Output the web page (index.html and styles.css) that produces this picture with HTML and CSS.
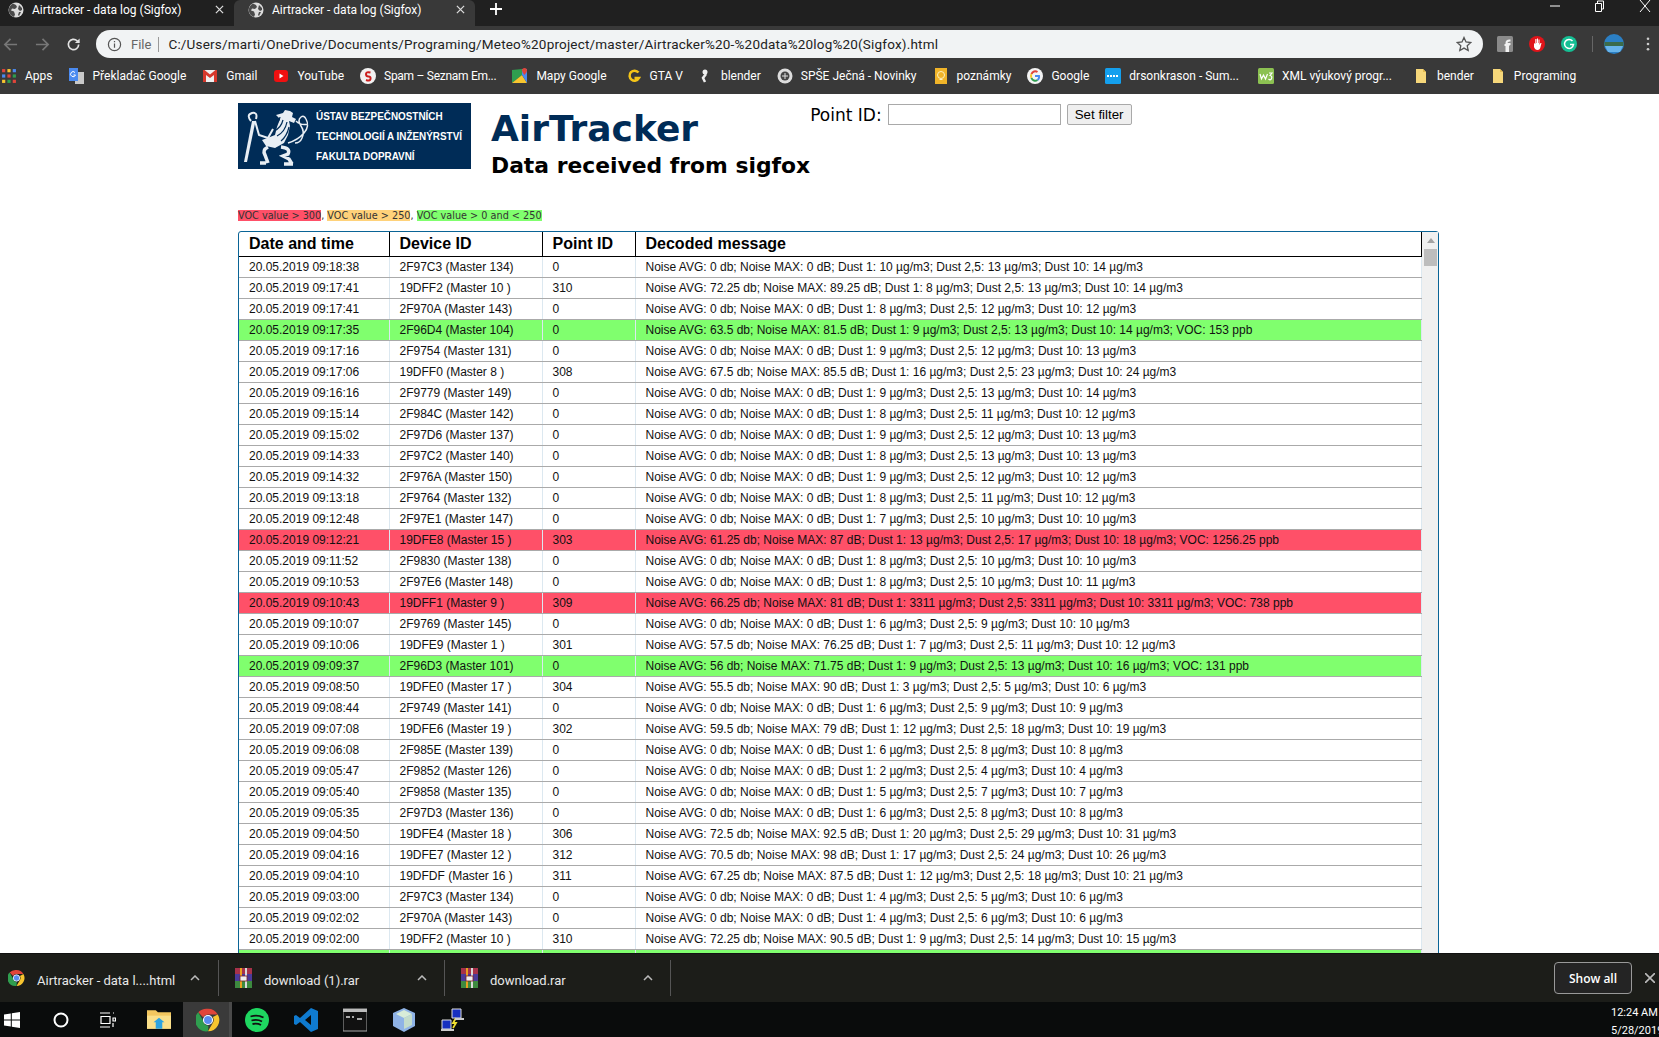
FILE: index.html
```html
<!DOCTYPE html>
<html lang="en">
	<head>
		<meta charset="UTF-8">
		<meta name="viewport" content="width=device-width, initial-scale=1.0">
		<title>Airtracker - data log (Sigfox)</title>
		<link rel="stylesheet" href="styles.css">
	</head>
	<body>
		<svg class="defs" width="0" height="0">
			<defs>
				<symbol id="globe" viewBox="0 0 16 16">
					<circle cx="8" cy="8" r="7.5" fill="#dcdcdc"/>
					<path d="M5 1.5l3 1.5 1 2-2 2-3-.5-1 2 3 1 1 3-1 2.5C3 14 .8 11.5.8 8 .8 5.300 2.500 2.700 5 1.500zM11 3l3 3v2l-2 1-2-2zM11 10l2 0-2 4-1-1z" fill="#4a4a4a"/>
				</symbol>
				<symbol id="chrome" viewBox="0 0 32 32">
					<path d="M16 1a15 15 0 0 1 13 7.500H16a7.500 7.500 0 0 0-6.500 3.750L3 5.800A15 15 0 0 1 16 1z" fill="#e0453a"/>
					<path d="M29 8.500A15 15 0 0 1 16 31l6.500-11.250A7.500 7.500 0 0 0 22.500 12z" fill="#f7c52f"/>
					<path d="M16 31A15 15 0 0 1 3 5.800l6.500 11.200a7.500 7.500 0 0 0 7 6.500z" fill="#2f9e4f"/>
					<circle cx="16" cy="16" r="6" fill="#5a8cf0" stroke="#fff" stroke-width="1.500"/>
				</symbol>
				<symbol id="folder" viewBox="0 0 16 16">
					<path d="M3 1h7l3 3v11H3z" fill="#f6d77a"/>
					<path d="M10 1l3 3h-3z" fill="#e3b94e"/>
				</symbol>
				<symbol id="rar" viewBox="0 0 17 20">
					<rect width="17" height="6" fill="#a6324a"/>
					<rect y="6" width="17" height="7" fill="#4b3a9a"/>
					<rect y="13" width="17" height="7" fill="#3d8a3f"/>
					<rect x="5" y="0" width="2" height="20" fill="#e8a020"/>
					<rect x="10" y="0" width="2" height="20" fill="#d9d9d9"/>
					<rect x="5" y="8" width="7" height="5" fill="#f0f0f0" stroke="#7a1f1f" stroke-width=".8"/>
				</symbol>
			</defs>
		</svg>

		<div class="tabbar">
			<div class="tab">
				<svg class="fav"><use href="#globe"/></svg>
				<span class="tab-title">Airtracker - data log (Sigfox)</span>
				<svg class="tab-x" viewBox="0 0 10 10"><path d="M1 1l8 8M9 1l-8 8"/></svg>
			</div>
			<div class="tab tab-on">
				<svg class="fav"><use href="#globe"/></svg>
				<span class="tab-title">Airtracker - data log (Sigfox)</span>
				<svg class="tab-x" viewBox="0 0 10 10"><path d="M1 1l8 8M9 1l-8 8"/></svg>
			</div>
			<svg class="tab-new" viewBox="0 0 12 12"><path d="M6 0v12M0 6h12"/></svg>
			<div class="winbtns">
				<svg class="win" viewBox="0 0 12 12"><path d="M1 6h10"/></svg>
				<svg class="win" viewBox="0 0 12 12"><path d="M1.500 3.500h6v8h-6zM3.500 3.500v-2.500h6v8h-2"/></svg>
				<svg class="win" viewBox="0 0 12 12"><path d="M1 0l10 12M11 0l-10 12"/></svg>
			</div>
		</div>

		<div class="navbar">
			<svg class="nav-ico nav-off" viewBox="0 0 16 16"><path d="M15 8H2M8 2L2 8l6 6"/></svg>
			<svg class="nav-ico nav-off" viewBox="0 0 16 16"><path d="M1 8h13M8 2l6 6-6 6"/></svg>
			<svg class="nav-ico" viewBox="0 0 16 16"><path d="M13.500 8a5.500 5.500 0 1 1-1.700-4L14 6"/><path class="fill" d="M14.500 1.500v5h-5z"/></svg>
			<div class="omni">
				<svg class="info" viewBox="0 0 16 16"><circle cx="8" cy="8" r="6.500"/><path d="M8 7v4.500M8 4.200v1.500"/></svg>
				<span class="scheme">File</span>
				<span class="url">C:/Users/marti/OneDrive/Documents/Programing/Meteo%20project/master/Airtracker%20-%20data%20log%20(Sigfox).html</span>
				<svg class="star" viewBox="0 0 16 16"><path d="M8 1.500l2 4.500 4.800.5-3.600 3.200 1 4.800L8 12.100l-4.200 2.400 1-4.800L1.200 6.500 6 6z"/></svg>
			</div>
			<div class="exts">
				<svg class="ext" viewBox="0 0 16 16"><rect width="16" height="16" rx="1.500" fill="#8a8a8a"/><path d="M11 16V8h2.500M13.500 4.500H12.500Q9.500 4.500 9.500 7v9M7.500 9h5" fill="none" stroke="#f2f2f2" stroke-width="2"/></svg>
				<svg class="ext" viewBox="0 0 16 16"><circle cx="8" cy="8" r="8" fill="#e0141a"/><path d="M5 7v4q1 3 3.500 3t3-3l1-4-1 0-1 2V3.500H9.500V7h-.5V2.500H8V7h-.5V3H6.300v5z" fill="#fff"/></svg>
				<svg class="ext" viewBox="0 0 16 16"><circle cx="8" cy="8" r="8" fill="#15bf94"/><path d="M11.500 5a4.500 4.500 0 1 0 1 3.500H9" fill="none" stroke="#fff" stroke-width="1.500"/></svg>
				<span class="ext-sep"></span>
				<svg class="ext ext-user" viewBox="0 0 20 20"><circle cx="10" cy="10" r="10" fill="#2b7fc4"/><path d="M.5 8h19v4H.5z" fill="#3b6b4a"/><path d="M1 12h18l-3 6H4z" fill="#68b4ea"/></svg>
				<svg class="dots" viewBox="0 0 4 16"><circle cx="2" cy="2" r="1.500"/><circle cx="2" cy="8" r="1.500"/><circle cx="2" cy="14" r="1.500"/></svg>
			</div>
		</div>

		<div class="bookmarks">
			<a class="bm"><svg class="bm-ico" viewBox="0 0 15 15">
				<path d="M1 1h3v3H1z" fill="#e0453a"/><path d="M6 1h3v3H6z" fill="#f7c52f"/><path d="M11 1h3v3h-3z" fill="#4a8af0"/>
				<path d="M1 6h3v3H1z" fill="#4a8af0"/><path d="M6 6h3v3H6z" fill="#e0453a"/><path d="M11 6h3v3h-3z" fill="#2f9e4f"/>
				<path d="M1 11h3v3H1z" fill="#f7c52f"/><path d="M6 11h3v3H6z" fill="#2f9e4f"/><path d="M11 11h3v3h-3z" fill="#e0453a"/>
			</svg>Apps</a>
			<a class="bm"><svg class="bm-ico" viewBox="0 0 16 16"><path d="M6 4h9v12H6z" fill="#c9c9c9"/><path d="M0 0h9v13H0z" fill="#4a8af0"/><path d="M6 4.500a2.500 2.500 0 1 0 .5 2.500H4.500" fill="none" stroke="#fff"/></svg>Překladač Google</a>
			<a class="bm"><svg class="bm-ico" viewBox="0 0 16 16"><path d="M1 2h14v12H1z" fill="#f0f0f0"/><path d="M1 2v12h3V7l4 3 4-3v7h3V2h-1.500L8 6.500 2.500 2z" fill="#d6382c"/></svg>Gmail</a>
			<a class="bm"><svg class="bm-ico" viewBox="0 0 16 16"><rect x="1" y="2" width="14" height="12" rx="3" fill="#f01010"/><path d="M6.500 5.500v5l4-2.500z" fill="#fff"/></svg>YouTube</a>
			<a class="bm bm-tight"><svg class="bm-ico" viewBox="0 0 16 16"><circle cx="8" cy="8" r="8" fill="#f2f2f2"/><path d="M10.500 4.500Q6 3.500 6 6t2.500 2.500 2 2.500-4.500 1" fill="none" stroke="#cc1f1f" stroke-width="2"/></svg>Spam – Seznam Em...</a>
			<a class="bm"><svg class="bm-ico" viewBox="0 0 16 16"><path d="M0 2l10-1v6L0 15z" fill="#2f9e4f"/><path d="M0 15l10-8 5 8z" fill="#f7c52f"/><path d="M10 7l5 8V1H10z" fill="#4a8af0"/><path d="M12.500 0a2.500 2.500 0 0 1 2.500 2.500Q15 4 12.500 7 10 4 10 2.500A2.500 2.500 0 0 1 12.500 0z" fill="#e0453a"/></svg>Mapy Google</a>
			<a class="bm bm-push"><svg class="bm-ico" viewBox="0 0 16 16"><path d="M12.500 4.500A5 5 0 1 0 13 10H8.500" fill="none" stroke="#f5c518" stroke-width="2.500"/></svg>GTA V</a>
			<a class="bm bm-pull"><svg class="bm-ico" viewBox="0 0 16 16"><circle cx="8" cy="4" r="2.500" fill="#eee"/><path d="M9 6l-3 4 2 4" fill="none" stroke="#eee" stroke-width="2.500"/></svg>blender</a>
			<a class="bm"><svg class="bm-ico" viewBox="0 0 16 16"><circle cx="8" cy="8" r="7.500" fill="#ddd"/><circle cx="8" cy="8" r="4.500" fill="#444"/><path d="M5 8h6M8 5v6" stroke="#ddd"/></svg>SPŠE Ječná - Novinky</a>
			<a class="bm"><svg class="bm-ico" viewBox="0 0 16 16"><path d="M2 0h12v16H2z" fill="#f0b429"/><circle cx="8" cy="7" r="3.500" fill="none" stroke="#fdf0c0"/><path d="M6.500 11.500h3" stroke="#fdf0c0"/></svg>poznámky</a>
			<a class="bm"><svg class="bm-ico" viewBox="0 0 16 16"><circle cx="8" cy="8" r="8" fill="#f4f4f4"/><path d="M4.500 6a4 4 0 0 1 6-2" fill="none" stroke="#e0453a" stroke-width="2"/><path d="M4.500 6a4 4 0 0 0 0 4" fill="none" stroke="#f7c52f" stroke-width="2"/><path d="M4.500 10a4 4 0 0 0 6 2" fill="none" stroke="#2f9e4f" stroke-width="2"/><path d="M10.500 12a4 4 0 0 0 1.500-4H8" fill="none" stroke="#4a8af0" stroke-width="2"/></svg>Google</a>
			<a class="bm"><svg class="bm-ico" viewBox="0 0 16 16"><rect width="16" height="16" rx="1.500" fill="#14a0ee"/><path d="M2 8h12" stroke="#fff" stroke-width="2" stroke-dasharray="2 1"/></svg>drsonkrason - Sum...</a>
			<a class="bm bm-push"><svg class="bm-ico" viewBox="0 0 16 16"><rect width="16" height="16" rx="1.500" fill="#8cc152"/><path d="M2 6l1.500 5 2-4 2 4L9.500 6M11 5h3l-2 2.500q2.500.5 1.500 3t-3 .5" fill="none" stroke="#fff" stroke-width="1.200"/></svg>XML výukový progr...</a>
			<a class="bm bm-push2"><svg class="bm-ico"><use href="#folder"/></svg>bender</a>
			<a class="bm"><svg class="bm-ico"><use href="#folder"/></svg>Programing</a>
		</div>

		<main class="page">
			<header class="head">
				<div class="logo">
					<svg class="lion" viewBox="0 0 78 66">
						<path class="lion-fill" d="M6 59L14 18h3.500L9 59z"/>
						<path class="lion-line" d="M13 18q-5-6 1-8 6-1 4 6M17 18l4 14 9 3 5-9"/>
						<path class="lion-fill" d="M38 12l7-2 2-3 5 1 3 2-1 4 4 2-2 4-5-2 1 5-2 9-4 8-9 5-9-2-4-6 8-3 5-2 2-8 3-8z"/>
						<path class="lion-blue" d="M45 17q-2 8-9 11M49 19q-2 10-10 14M51 24q-2 9-8 14M42 14q-1 6-6 8"/>
						<path class="lion-leg" d="M30 44q-6 3-3 8l3 8M28 60h-6M43 44q10 1 7 7l-5 2 6 3 3 5M55 61h-9"/>
						<path class="lion-tail" d="M50 40q10-3 16-10 6-7 2-14-2-4-5-2-4 3 0 9 4 6 1 12-2 5-7 5M58 18q5 5 12 3"/>
					</svg>
					<div class="logo-text">
						<span>ÚSTAV BEZPEČNOSTNÍCH</span>
						<span>TECHNOLOGIÍ A INŽENÝRSTVÍ</span>
						<span>FAKULTA DOPRAVNÍ</span>
					</div>
				</div>
				<div class="titles">
					<h1>AirTracker</h1>
					<h2>Data received from sigfox</h2>
				</div>
				<form class="filter">
					<label for="point">Point ID:</label>
					<input id="point" type="text">
					<button type="submit">Set filter</button>
				</form>
			</header>

			<p class="legend"><span class="red">VOC value &gt; 300</span>, <span class="orange">VOC value &gt; 250</span>, <span class="green">VOC value &gt; 0 and &lt; 250</span></p>

			<div class="logbox">
				<table class="log">
					<colgroup><col class="c1"><col class="c2"><col class="c3"><col></colgroup>
					<thead>
						<tr><th>Date and time</th><th>Device ID</th><th>Point ID</th><th>Decoded message</th></tr>
					</thead>
					<tbody>
						<tr><td>20.05.2019 09:18:38</td><td>2F97C3 (Master 134)</td><td>0</td><td>Noise AVG: 0 db; Noise MAX: 0 dB; Dust 1: 10 µg/m3; Dust 2,5: 13 µg/m3; Dust 10: 14 µg/m3</td></tr>
						<tr><td>20.05.2019 09:17:41</td><td>19DFF2 (Master 10 )</td><td>310</td><td>Noise AVG: 72.25 db; Noise MAX: 89.25 dB; Dust 1: 8 µg/m3; Dust 2,5: 13 µg/m3; Dust 10: 14 µg/m3</td></tr>
						<tr><td>20.05.2019 09:17:41</td><td>2F970A (Master 143)</td><td>0</td><td>Noise AVG: 0 db; Noise MAX: 0 dB; Dust 1: 8 µg/m3; Dust 2,5: 12 µg/m3; Dust 10: 12 µg/m3</td></tr>
						<tr class="green"><td>20.05.2019 09:17:35</td><td>2F96D4 (Master 104)</td><td>0</td><td>Noise AVG: 63.5 db; Noise MAX: 81.5 dB; Dust 1: 9 µg/m3; Dust 2,5: 13 µg/m3; Dust 10: 14 µg/m3; VOC: 153 ppb</td></tr>
						<tr><td>20.05.2019 09:17:16</td><td>2F9754 (Master 131)</td><td>0</td><td>Noise AVG: 0 db; Noise MAX: 0 dB; Dust 1: 9 µg/m3; Dust 2,5: 12 µg/m3; Dust 10: 13 µg/m3</td></tr>
						<tr><td>20.05.2019 09:17:06</td><td>19DFF0 (Master 8 )</td><td>308</td><td>Noise AVG: 67.5 db; Noise MAX: 85.5 dB; Dust 1: 16 µg/m3; Dust 2,5: 23 µg/m3; Dust 10: 24 µg/m3</td></tr>
						<tr><td>20.05.2019 09:16:16</td><td>2F9779 (Master 149)</td><td>0</td><td>Noise AVG: 0 db; Noise MAX: 0 dB; Dust 1: 9 µg/m3; Dust 2,5: 13 µg/m3; Dust 10: 14 µg/m3</td></tr>
						<tr><td>20.05.2019 09:15:14</td><td>2F984C (Master 142)</td><td>0</td><td>Noise AVG: 0 db; Noise MAX: 0 dB; Dust 1: 8 µg/m3; Dust 2,5: 11 µg/m3; Dust 10: 12 µg/m3</td></tr>
						<tr><td>20.05.2019 09:15:02</td><td>2F97D6 (Master 137)</td><td>0</td><td>Noise AVG: 0 db; Noise MAX: 0 dB; Dust 1: 9 µg/m3; Dust 2,5: 12 µg/m3; Dust 10: 13 µg/m3</td></tr>
						<tr><td>20.05.2019 09:14:33</td><td>2F97C2 (Master 140)</td><td>0</td><td>Noise AVG: 0 db; Noise MAX: 0 dB; Dust 1: 8 µg/m3; Dust 2,5: 13 µg/m3; Dust 10: 13 µg/m3</td></tr>
						<tr><td>20.05.2019 09:14:32</td><td>2F976A (Master 150)</td><td>0</td><td>Noise AVG: 0 db; Noise MAX: 0 dB; Dust 1: 9 µg/m3; Dust 2,5: 12 µg/m3; Dust 10: 12 µg/m3</td></tr>
						<tr><td>20.05.2019 09:13:18</td><td>2F9764 (Master 132)</td><td>0</td><td>Noise AVG: 0 db; Noise MAX: 0 dB; Dust 1: 8 µg/m3; Dust 2,5: 11 µg/m3; Dust 10: 12 µg/m3</td></tr>
						<tr><td>20.05.2019 09:12:48</td><td>2F97E1 (Master 147)</td><td>0</td><td>Noise AVG: 0 db; Noise MAX: 0 dB; Dust 1: 7 µg/m3; Dust 2,5: 10 µg/m3; Dust 10: 10 µg/m3</td></tr>
						<tr class="red"><td>20.05.2019 09:12:21</td><td>19DFE8 (Master 15 )</td><td>303</td><td>Noise AVG: 61.25 db; Noise MAX: 87 dB; Dust 1: 13 µg/m3; Dust 2,5: 17 µg/m3; Dust 10: 18 µg/m3; VOC: 1256.25 ppb</td></tr>
						<tr><td>20.05.2019 09:11:52</td><td>2F9830 (Master 138)</td><td>0</td><td>Noise AVG: 0 db; Noise MAX: 0 dB; Dust 1: 8 µg/m3; Dust 2,5: 10 µg/m3; Dust 10: 10 µg/m3</td></tr>
						<tr><td>20.05.2019 09:10:53</td><td>2F97E6 (Master 148)</td><td>0</td><td>Noise AVG: 0 db; Noise MAX: 0 dB; Dust 1: 8 µg/m3; Dust 2,5: 10 µg/m3; Dust 10: 11 µg/m3</td></tr>
						<tr class="red"><td>20.05.2019 09:10:43</td><td>19DFF1 (Master 9 )</td><td>309</td><td>Noise AVG: 66.25 db; Noise MAX: 81 dB; Dust 1: 3311 µg/m3; Dust 2,5: 3311 µg/m3; Dust 10: 3311 µg/m3; VOC: 738 ppb</td></tr>
						<tr><td>20.05.2019 09:10:07</td><td>2F9769 (Master 145)</td><td>0</td><td>Noise AVG: 0 db; Noise MAX: 0 dB; Dust 1: 6 µg/m3; Dust 2,5: 9 µg/m3; Dust 10: 10 µg/m3</td></tr>
						<tr><td>20.05.2019 09:10:06</td><td>19DFE9 (Master 1 )</td><td>301</td><td>Noise AVG: 57.5 db; Noise MAX: 76.25 dB; Dust 1: 7 µg/m3; Dust 2,5: 11 µg/m3; Dust 10: 12 µg/m3</td></tr>
						<tr class="green"><td>20.05.2019 09:09:37</td><td>2F96D3 (Master 101)</td><td>0</td><td>Noise AVG: 56 db; Noise MAX: 71.75 dB; Dust 1: 9 µg/m3; Dust 2,5: 13 µg/m3; Dust 10: 16 µg/m3; VOC: 131 ppb</td></tr>
						<tr><td>20.05.2019 09:08:50</td><td>19DFE0 (Master 17 )</td><td>304</td><td>Noise AVG: 55.5 db; Noise MAX: 90 dB; Dust 1: 3 µg/m3; Dust 2,5: 5 µg/m3; Dust 10: 6 µg/m3</td></tr>
						<tr><td>20.05.2019 09:08:44</td><td>2F9749 (Master 141)</td><td>0</td><td>Noise AVG: 0 db; Noise MAX: 0 dB; Dust 1: 6 µg/m3; Dust 2,5: 9 µg/m3; Dust 10: 9 µg/m3</td></tr>
						<tr><td>20.05.2019 09:07:08</td><td>19DFE6 (Master 19 )</td><td>302</td><td>Noise AVG: 59.5 db; Noise MAX: 79 dB; Dust 1: 12 µg/m3; Dust 2,5: 18 µg/m3; Dust 10: 19 µg/m3</td></tr>
						<tr><td>20.05.2019 09:06:08</td><td>2F985E (Master 139)</td><td>0</td><td>Noise AVG: 0 db; Noise MAX: 0 dB; Dust 1: 6 µg/m3; Dust 2,5: 8 µg/m3; Dust 10: 8 µg/m3</td></tr>
						<tr><td>20.05.2019 09:05:47</td><td>2F9852 (Master 126)</td><td>0</td><td>Noise AVG: 0 db; Noise MAX: 0 dB; Dust 1: 2 µg/m3; Dust 2,5: 4 µg/m3; Dust 10: 4 µg/m3</td></tr>
						<tr><td>20.05.2019 09:05:40</td><td>2F9858 (Master 135)</td><td>0</td><td>Noise AVG: 0 db; Noise MAX: 0 dB; Dust 1: 5 µg/m3; Dust 2,5: 7 µg/m3; Dust 10: 7 µg/m3</td></tr>
						<tr><td>20.05.2019 09:05:35</td><td>2F97D3 (Master 136)</td><td>0</td><td>Noise AVG: 0 db; Noise MAX: 0 dB; Dust 1: 6 µg/m3; Dust 2,5: 8 µg/m3; Dust 10: 8 µg/m3</td></tr>
						<tr><td>20.05.2019 09:04:50</td><td>19DFE4 (Master 18 )</td><td>306</td><td>Noise AVG: 72.5 db; Noise MAX: 92.5 dB; Dust 1: 20 µg/m3; Dust 2,5: 29 µg/m3; Dust 10: 31 µg/m3</td></tr>
						<tr><td>20.05.2019 09:04:16</td><td>19DFE7 (Master 12 )</td><td>312</td><td>Noise AVG: 70.5 db; Noise MAX: 98 dB; Dust 1: 17 µg/m3; Dust 2,5: 24 µg/m3; Dust 10: 26 µg/m3</td></tr>
						<tr><td>20.05.2019 09:04:10</td><td>19DFDF (Master 16 )</td><td>311</td><td>Noise AVG: 67.25 db; Noise MAX: 87.5 dB; Dust 1: 12 µg/m3; Dust 2,5: 18 µg/m3; Dust 10: 21 µg/m3</td></tr>
						<tr><td>20.05.2019 09:03:00</td><td>2F97C3 (Master 134)</td><td>0</td><td>Noise AVG: 0 db; Noise MAX: 0 dB; Dust 1: 4 µg/m3; Dust 2,5: 5 µg/m3; Dust 10: 6 µg/m3</td></tr>
						<tr><td>20.05.2019 09:02:02</td><td>2F970A (Master 143)</td><td>0</td><td>Noise AVG: 0 db; Noise MAX: 0 dB; Dust 1: 4 µg/m3; Dust 2,5: 6 µg/m3; Dust 10: 6 µg/m3</td></tr>
						<tr><td>20.05.2019 09:02:00</td><td>19DFF2 (Master 10 )</td><td>310</td><td>Noise AVG: 72.25 db; Noise MAX: 90.5 dB; Dust 1: 9 µg/m3; Dust 2,5: 14 µg/m3; Dust 10: 15 µg/m3</td></tr>
						<tr class="green"><td>&nbsp;</td><td></td><td></td><td></td></tr>
					</tbody>
				</table>
				<div class="scroll">
					<span class="scroll-up"></span>
					<span class="scroll-thumb"></span>
				</div>
			</div>
		</main>

		<div class="downloads">
			<div class="dl">
				<svg class="dl-ico"><use href="#chrome"/></svg>
				<span>Airtracker - data l....html</span>
				<svg class="chev" viewBox="0 0 10 6"><path d="M1 5l4-4 4 4"/></svg>
			</div>
			<div class="dl">
				<svg class="dl-ico"><use href="#rar"/></svg>
				<span>download (1).rar</span>
				<svg class="chev" viewBox="0 0 10 6"><path d="M1 5l4-4 4 4"/></svg>
			</div>
			<div class="dl">
				<svg class="dl-ico"><use href="#rar"/></svg>
				<span>download.rar</span>
				<svg class="chev" viewBox="0 0 10 6"><path d="M1 5l4-4 4 4"/></svg>
			</div>
			<button class="showall">Show all</button>
			<svg class="dl-x" viewBox="0 0 10 10"><path d="M0 0l10 10M10 0L0 10"/></svg>
		</div>

		<div class="taskbar">
			<div class="task task-start"><svg class="task-ico" viewBox="0 0 16 16"><path d="M0 2.500l6.800-1v6H0zM7.800 1.300L16 0v7.500H7.800zM0 8.500h6.800v6l-6.800-1zM7.800 8.500H16V16l-8.200-1.300z" fill="#fff"/></svg></div>
			<div class="task"><svg class="task-ico" viewBox="0 0 16 16"><circle cx="8" cy="8" r="6.500" fill="none" stroke="#fff" stroke-width="2"/></svg></div>
			<div class="task task-view"><svg class="task-ico" viewBox="0 0 16 16"><path d="M0 1h10M0 15h10M1 4.500h9v7H1zM13 1h1M13 6h2.500v3H13zM13 11v4" fill="none" stroke="#fff" stroke-width="1.200"/></svg></div>
			<div class="task"><svg class="task-ico task-lg" viewBox="0 0 22 20"><path d="M0 1h8l2 2h12v15H0z" fill="#f3c75f"/><path d="M0 6h22v12H0z" fill="#fbe08a"/><path d="M6 12l5-4 5 4h-2v6H8v-6z" fill="#2ea3e0"/></svg></div>
			<div class="task task-on"><svg class="task-ico task-lg"><use href="#chrome"/></svg></div>
			<div class="task"><svg class="task-ico task-lg" viewBox="0 0 24 24"><circle cx="12" cy="12" r="12" fill="#1ed760"/><path d="M5.500 8.500q7-2 13 1M6.500 12.500q6-1.500 10.500 1M7.500 16q5-1 8.500 1" fill="none" stroke="#111" stroke-width="1.800"/></svg></div>
			<div class="task"><svg class="task-ico task-lg" viewBox="0 0 24 24"><path d="M17 0l7 3v18l-7 3-11-10-4 3-2-1V8l2-1 4 3zM17 7l-6 5 6 5z" fill="#0f7bd0"/></svg></div>
			<div class="task"><svg class="task-ico task-lg" viewBox="0 0 24 22"><rect width="24" height="22" fill="#111" stroke="#aaa"/><rect width="24" height="3" fill="#bbb"/><path d="M3 8h4M9 8h2M14 10h5" stroke="#ddd" stroke-width="1.500"/></svg></div>
			<div class="task"><svg class="task-ico task-lg" viewBox="0 0 22 24"><path d="M11 0l11 5v13l-11 6-11-6V5z" fill="#8fb3e6"/><path d="M11 2l8 4-8 4-8-4z" fill="#d8ecd8"/><path d="M11 10l8-4v11l-8 4z" fill="#c3dccb"/></svg></div>
			<div class="task"><svg class="task-ico task-lg" viewBox="0 0 24 24"><path d="M11 1h9v9h-9zM1 12h9v9H1z" fill="#1730c0" stroke="#ddd"/><path d="M15 10l-3 5h3l-3 5" fill="none" stroke="#f0e030" stroke-width="1.800"/><path d="M14 11h9M0 22h13" stroke="#ccc" stroke-width="2"/></svg></div>
			<div class="clock">
				<span>12:24 AM</span>
				<span>5/28/2019</span>
			</div>
		</div>
	</body>
</html>
```

FILE: styles.css
```css
body {
	font-family: Roboto, sans-serif;
	margin: 0;
	height: 100vh;
	display: flex;
	flex-direction: column;
	overflow: hidden;
	background-color: #ffffff;
}

.defs {
	position: absolute;
}

/* browser chrome */
.tabbar {
	height: 26px;
	flex: none;
	display: flex;
	align-items: center;
	background-color: #202020;
	color: #ffffff;
}

.tab {
	width: 234px;
	height: 26px;
	box-sizing: border-box;
	padding: 0 0 7px 8px;
	display: flex;
	align-items: center;
	font-size: 12px;
}

.tab-on {
	width: 241px;
	padding-left: 14px;
	background-color: #393939;
	border-radius: 6px 6px 0 0;
}

.fav {
	width: 16px;
	height: 16px;
	margin-right: 8px;
	flex: none;
}

.tab-title {
	flex: 1;
}

.tab-x {
	width: 9px;
	height: 9px;
	margin-right: 10px;
	fill: none;
	stroke: #dddddd;
	stroke-width: 1.400;
}

.tab-new {
	width: 12px;
	height: 12px;
	margin: 0 0 8px 15px;
	fill: none;
	stroke: #ffffff;
	stroke-width: 1.800;
}

.winbtns {
	margin-left: auto;
	display: flex;
	gap: 33px;
	padding: 0 8px 14px 0;
}

.win {
	width: 12px;
	height: 12px;
	fill: none;
	stroke: #ffffff;
	stroke-width: 1;
}

.navbar {
	height: 38px;
	flex: none;
	box-sizing: border-box;
	padding: 0 0 2px 3px;
	display: flex;
	align-items: center;
	background-color: #393939;
}

.nav-ico {
	width: 15px;
	height: 15px;
	margin-right: 16.500px;
	flex: none;
	fill: none;
	stroke: #e3e3e3;
	stroke-width: 1.800;
}

.nav-off {
	stroke: #777777;
}

.nav-ico .fill {
	fill: #e3e3e3;
	stroke: none;
}

.omni {
	width: 1387px;
	height: 28px;
	flex: none;
	margin-left: -1.500px;
	box-sizing: border-box;
	padding-left: 11px;
	display: flex;
	align-items: center;
	border-radius: 14px;
	background-color: #f1f3f4;
	font-size: 13px;
}

.info {
	width: 15px;
	height: 15px;
	margin-right: 9px;
	fill: none;
	stroke: #555555;
	stroke-width: 1.300;
}

.scheme {
	padding-right: 7px;
	margin-right: 9px;
	border-right: 1px solid #999999;
	color: #666666;
}

.url {
	flex: 1;
	white-space: nowrap;
	font-size: 13.500px;
	letter-spacing: 0.190px;
	color: #222222;
}

.star {
	width: 16px;
	height: 16px;
	margin-right: 11px;
	fill: none;
	stroke: #555555;
	stroke-width: 1.300;
}

.exts {
	display: flex;
	align-items: center;
	gap: 16px;
	padding-left: 14px;
}

.ext {
	width: 16px;
	height: 16px;
	flex: none;
}

.ext-user {
	width: 20px;
	height: 20px;
	margin-left: -3px;
}

.ext-sep {
	width: 1px;
	height: 16px;
	margin: 0 -2px 0 -1px;
	background-color: #666666;
}

.dots {
	width: 4px;
	height: 14px;
	margin-left: 6px;
	fill: #cccccc;
}

.bookmarks {
	height: 30px;
	flex: none;
	box-sizing: border-box;
	padding: 0 0 6px 1px;
	display: flex;
	align-items: center;
	gap: 16px;
	background-color: #393939;
	color: #ffffff;
	font-size: 12px;
	white-space: nowrap;
}

.bm {
	display: flex;
	align-items: center;
	gap: 8px;
}

.bm-pull {
	margin-left: -2px;
}

.bm-tight {
	letter-spacing: -0.280px;
}

.bm-push {
	margin-left: 3px;
}

.bm-push2 {
	margin-left: 5px;
}

.bm-ico {
	width: 16px;
	height: 16px;
	flex: none;
}

/* the page itself */
.page {
	flex: 1;
	min-height: 0;
	overflow: hidden;
	padding: 9px 220px 0 238px;
	background-color: #ffffff;
}

.head {
	height: 106px;
	display: flex;
	align-items: flex-start;
}

.logo {
	width: 233px;
	height: 66px;
	flex: none;
	display: flex;
	background-color: #002c57;
	color: #ffffff;
}

.lion {
	width: 78px;
	height: 66px;
	flex: none;
}

.lion-fill {
	fill: #e8eef4;
}

.lion-line, .lion-tail, .lion-leg {
	fill: none;
	stroke: #e8eef4;
	stroke-width: 2;
}

.lion-leg {
	stroke-width: 3.500;
}

.lion-tail {
	stroke-width: 1.500;
}

.lion-blue {
	fill: none;
	stroke: #002c57;
	stroke-width: 1.200;
}

.logo-text {
	display: flex;
	flex-direction: column;
	gap: 8px;
	padding-top: 7px;
	font-family: "Liberation Sans", Arial, sans-serif;
	font-size: 11.500px;
	font-weight: bold;
	line-height: 12px;
	white-space: nowrap;
}

.logo-text span {
	transform: scaleX(0.86);
	transform-origin: left;
}

.titles {
	margin: 6px 0 0 20px;
	font-family: "DejaVu Sans", Verdana, sans-serif;
}

h1 {
	margin: 0 0 4px;
	font-size: 36px;
	line-height: 40px;
	color: #002c57;
}

h2 {
	margin: 0;
	font-size: 21.850px;
	line-height: 26px;
	white-space: nowrap;
	color: #000000;
}

.filter {
	display: flex;
	align-items: center;
	margin-top: 1px;
	font-family: "DejaVu Sans", Verdana, sans-serif;
	font-size: 17px;
}

.filter input {
	width: 173px;
	height: 21px;
	box-sizing: border-box;
	margin: 0 6px;
	border: 1px solid #a9a9a9;
}

.filter button {
	width: 65px;
	height: 21px;
	padding: 0;
	font-family: "Liberation Sans", Arial, sans-serif;
	font-size: 13.300px;
	color: #000000;
	background-color: #efefef;
	border: 1px solid #a9a9a9;
	border-radius: 2px;
}

.legend {
	margin: 0 0 9px;
	font-family: "DejaVu Sans", Verdana, sans-serif;
	font-size: 9.700px;
	line-height: 13px;
	white-space: nowrap;
	color: #333333;
}

.red {
	background-color: #ff5068;
}

.orange {
	background-color: #ffd27a;
}

.green {
	background-color: #80ff6e;
}

.logbox {
	display: flex;
	border: 1px solid #0a6496;
	border-radius: 3px;
}

.log {
	width: 1183px;
	flex: none;
	table-layout: fixed;
	border-collapse: collapse;
	font-family: "Liberation Sans", Arial, sans-serif;
	font-size: 12px;
	color: #111111;
}

.c1 {
	width: 150px;
}

.c2 {
	width: 153px;
}

.c3 {
	width: 93px;
}

.log th {
	height: 24px;
	padding: 0 0 0 10px;
	box-sizing: border-box;
	text-align: left;
	font-size: 16px;
	border-bottom: 1px solid #000000;
	border-right: 1px solid #000000;
	color: #000000;
}

.log td {
	height: 21px;
	padding: 0 0 0 10px;
	box-sizing: border-box;
	white-space: nowrap;
	overflow: hidden;
	border-bottom: 1px solid #aaaaaa;
	border-right: 1px solid #dce8f0;
}

.scroll {
	flex: 1;
	position: relative;
	background-color: #f0f0f0;
}

.scroll-up {
	position: absolute;
	top: 6px;
	left: 5px;
	border: 4px solid transparent;
	border-top: 0;
	border-bottom: 5px solid #a3a3a3;
}

.scroll-thumb {
	position: absolute;
	top: 17px;
	left: 2px;
	width: 13px;
	height: 17px;
	background-color: #bdbdbd;
}

/* download shelf */
.downloads {
	height: 49px;
	flex: none;
	box-sizing: border-box;
	border-top: 1px solid #111111;
	display: flex;
	align-items: center;
	background-color: #1c1d19;
	color: #e8e8e8;
	font-size: 13px;
}

.dl {
	width: 226px;
	height: 36px;
	flex: none;
	box-sizing: border-box;
	padding: 0 17px 0 16px;
	display: flex;
	align-items: center;
	border-right: 1px solid #555555;
}

.dl:first-child {
	width: 219px;
	padding: 0 18px 0 8px;
}

.dl span {
	margin-left: 12px;
	padding-top: 5px;
	white-space: nowrap;
}

.dl-ico {
	width: 17px;
	height: 20px;
	flex: none;
}

.chev {
	width: 10px;
	height: 6px;
	margin-left: auto;
	fill: none;
	stroke: #bbbbbb;
	stroke-width: 1.500;
}

.showall {
	width: 78px;
	height: 32px;
	margin-left: auto;
	margin-right: 13px;
	padding: 0;
	font-family: "Open Sans", sans-serif;
	font-size: 12px;
	font-weight: 600;
	color: #ffffff;
	background-color: #242424;
	border: 1px solid #999999;
	border-radius: 4px;
}

.dl-x {
	width: 10px;
	height: 10px;
	margin-right: 4px;
	fill: none;
	stroke: #bbbbbb;
	stroke-width: 1.600;
}

/* windows taskbar */
.taskbar {
	height: 35px;
	flex: none;
	display: flex;
	align-items: stretch;
	background-color: #0a0c0c;
	color: #ffffff;
}

.task {
	width: 49px;
	flex: none;
	display: flex;
	align-items: center;
	justify-content: center;
}

.task-start {
	width: 36px;
	justify-content: flex-start;
	padding-left: 4px;
	box-sizing: border-box;
}

.task-view {
	padding-right: 4px;
	box-sizing: border-box;
}

.task-on {
	padding-left: 3px;
	background-color: #3a3a3a;
	border-right: 3px solid #4a4a4a;
	box-sizing: border-box;
}

.task-ico {
	width: 16px;
	height: 16px;
}

.task-lg {
	width: 24px;
	height: 24px;
}

.clock {
	margin-left: auto;
	width: 48px;
	padding-top: 2px;
	display: flex;
	flex-direction: column;
	font-size: 11px;
	line-height: 18px;
	white-space: nowrap;
	overflow: hidden;
}
```
